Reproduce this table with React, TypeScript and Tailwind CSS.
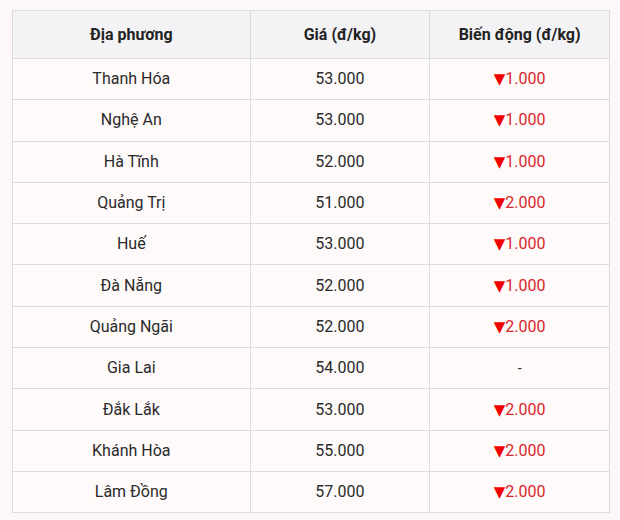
const rows: [string, string, string | null][] = [
  ['Thanh Hóa', '53.000', '1.000'],
  ['Nghệ An', '53.000', '1.000'],
  ['Hà Tĩnh', '52.000', '1.000'],
  ['Quảng Trị', '51.000', '2.000'],
  ['Huế', '53.000', '1.000'],
  ['Đà Nẵng', '52.000', '1.000'],
  ['Quảng Ngãi', '52.000', '2.000'],
  ['Gia Lai', '54.000', null],
  ['Đắk Lắk', '53.000', '2.000'],
  ['Khánh Hòa', '55.000', '2.000'],
  ['Lâm Đồng', '57.000', '2.000'],
];

export default function App() {
  return (
    <div className="w-[620px] h-[520px] bg-[#fdf8f7] pt-[10px] pl-[12px] font-['Roboto',sans-serif]">
      <table className="w-[598px] border-collapse bg-[#fefafa] text-[16px] text-[#2a2a2a]">
        <colgroup>
          <col className="w-[238px]" />
          <col className="w-[180px]" />
          <col className="w-[180px]" />
        </colgroup>
        <thead>
          <tr className="h-[48px] bg-[#f3f3f5]">
            <th className="border border-[#dcdcdc] font-bold text-[16px] text-[#222]">Địa phương</th>
            <th className="border border-[#dcdcdc] font-bold text-[16px] text-[#222]">Giá (đ/kg)</th>
            <th className="border border-[#dcdcdc] font-bold text-[16px] text-[#222]">Biến động (đ/kg)</th>
          </tr>
        </thead>
        <tbody>
          {rows.map(([place, price, change]) => (
            <tr key={place} className="h-[41.3px]">
              <td className="border border-[#dcdcdc] text-center">{place}</td>
              <td className="border border-[#dcdcdc] text-center">{price}</td>
              <td className="border border-[#dcdcdc] text-center">
                {change ? (
                  <span className="text-[#d9262b]">
                    <span className="text-[#f20000] text-[15px] font-['DejaVu_Sans',sans-serif]">▼</span>
                    {change}
                  </span>
                ) : (
                  <span className="text-[14px]">-</span>
                )}
              </td>
            </tr>
          ))}
        </tbody>
      </table>
    </div>
  );
}
